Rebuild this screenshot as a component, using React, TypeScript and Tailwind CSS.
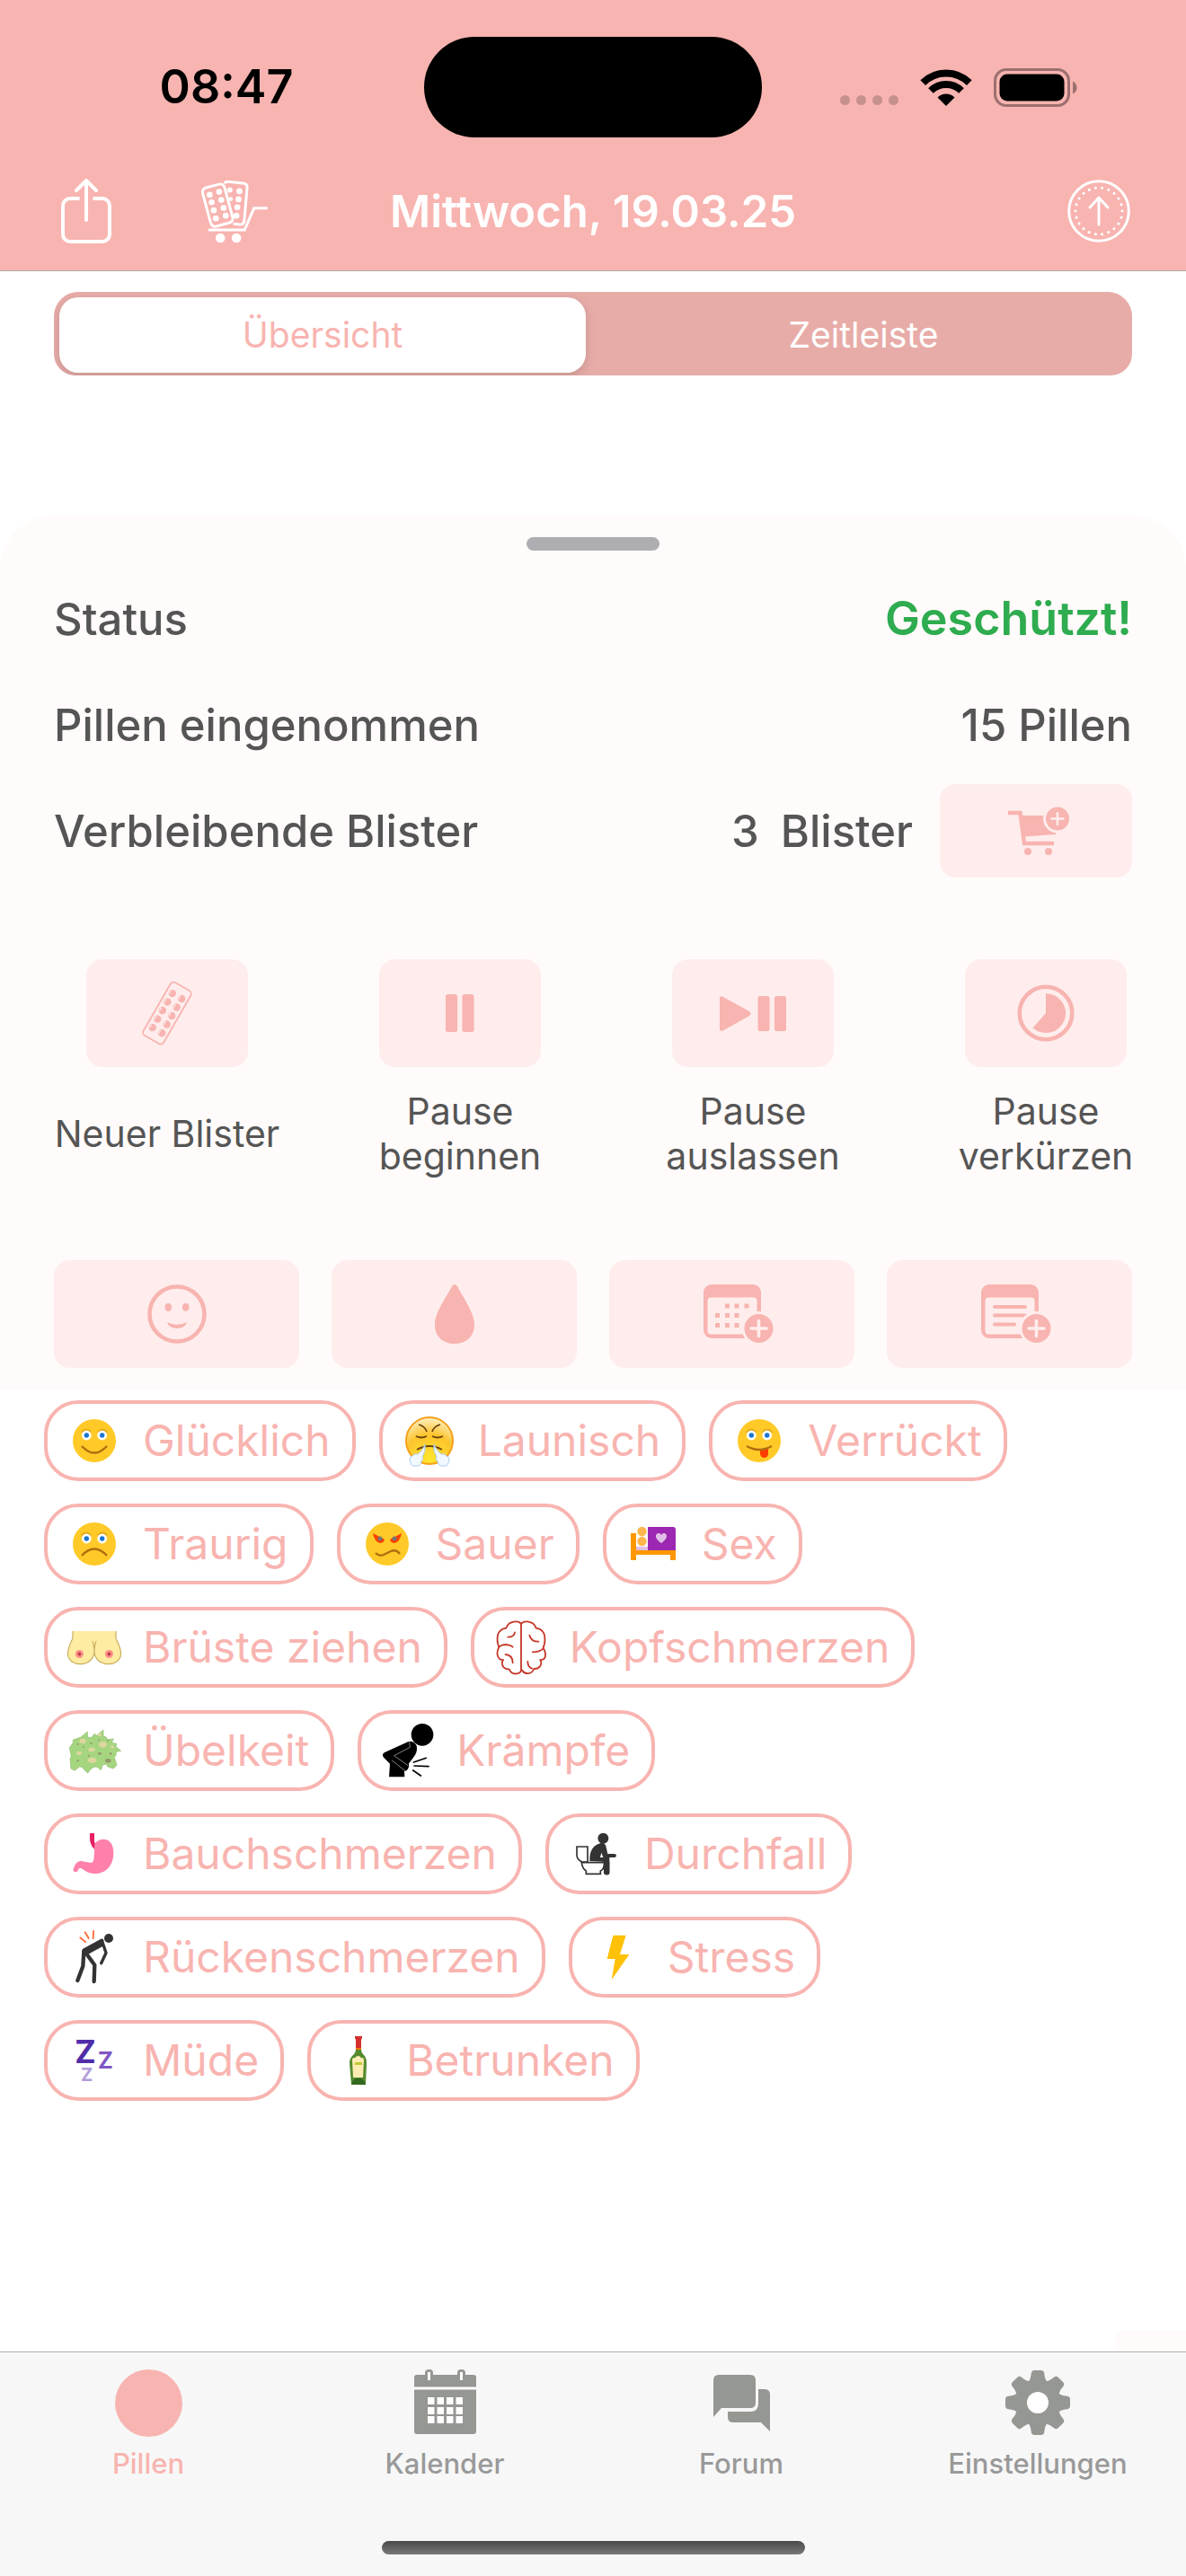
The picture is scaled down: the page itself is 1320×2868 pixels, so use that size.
import { useState } from "react";
import type { ReactNode } from "react";

/* START STATUS BAR ICONS */
function WifiIcon() {
  return (
    <svg className="w-[58px] h-[42px]" viewBox="0 0 58 42" fill="none" stroke="#000" strokeWidth="8">
      <path d="M3.2 16.2a36.5 36.5 0 0 1 51.6 0" />
      <path d="M12 25a24 24 0 0 1 34 0" />
      <path d="M29 42l-9.5-9.5a13.5 13.5 0 0 1 19 0z" fill="#000" stroke="none" />
    </svg>
  );
}

function BatteryIcon() {
  return (
    <svg className="w-[93px] h-[43px]" viewBox="0 0 93 43">
      <rect x="1.5" y="1.5" width="82" height="40" rx="12.5" fill="none" stroke="#9b706e" strokeWidth="3" />
      <rect x="6.5" y="6.5" width="72" height="30" rx="8.5" fill="#000" />
      <path d="M88 14.5c6 2.5 6 11.500 0 14z" fill="#9b706e" />
    </svg>
  );
}
/* END STATUS BAR ICONS */

/* START HEADER ICONS */
function ShareIcon() {
  return (
    <svg
      className="w-14 h-[72px]"
      viewBox="0 0 56 72"
      fill="none"
      stroke="#fff"
      strokeWidth="4"
      strokeLinecap="round"
      strokeLinejoin="round"
    >
      <path d="M19 22h-9a8 8 0 0 0-8 8v32a8 8 0 0 0 8 8h36a8 8 0 0 0 8-8V30a8 8 0 0 0-8-8h-9" />
      <path d="M28 46V3M17 13L28 2l11 11" />
    </svg>
  );
}

function BlisterCartIcon() {
  return (
    <svg className="w-[75px] h-[71px]" viewBox="69 88 226 212" fill="none" stroke="#fff" strokeWidth="9">
      <path d="M150 100q3-7 12-6l50 5q15 2 14 15l-10 112q-3 13-15 12l-22-3" />
      <rect x="89" y="106" width="76" height="134" rx="15" transform="rotate(-15 127 173)" />
      <path d="M96 256h121l32-73h45" />
      <g fill="#fff" stroke="none">
        <circle cx="100" cy="138" r="10" />
        <circle cx="132" cy="128" r="10" />
        <circle cx="107" cy="163" r="10" />
        <circle cx="139" cy="155" r="10" />
        <circle cx="114" cy="190" r="10" />
        <circle cx="147" cy="182" r="10" />
        <circle cx="121" cy="217" r="10" />
        <circle cx="154" cy="208" r="10" />
        <circle cx="168" cy="122" r="9" />
        <circle cx="200" cy="126" r="10" />
        <circle cx="171" cy="152" r="7" />
        <circle cx="197" cy="153" r="10" />
        <circle cx="193" cy="180" r="10" />
        <circle cx="190" cy="208" r="10" />
        <circle cx="136" cy="283" r="16" />
        <circle cx="190" cy="283" r="16" />
      </g>
    </svg>
  );
}

function TodayIcon() {
  return (
    <svg className="w-[70px] h-[70px]" viewBox="0 0 70 70" fill="none" stroke="#fff" strokeLinecap="round">
      <circle cx="35" cy="35" r="33.3" strokeWidth="3" />
      <circle cx="35" cy="35" r="26" strokeWidth="3" pathLength="220" strokeDasharray="0.1 9.9" />
      <path d="M35 50V21M25 31l10-11 10 11" strokeWidth="3" strokeLinejoin="round" />
    </svg>
  );
}
/* END HEADER ICONS */

/* START ACTION ICONS */
function CartPlusIcon() {
  return (
    <svg className="w-[78px] h-[54px]" viewBox="-8 0 78 54" fill="#f8b4b0">
      <path d="M0 7h13.5L18 41h33" fill="none" stroke="#f8b4b0" strokeWidth="4.5" />
      <path d="M14 10h41l-2 21-36 2.5z" />
      <circle cx="22" cy="50" r="4" />
      <circle cx="45" cy="50" r="4" />
      <circle cx="55" cy="13.5" r="16" fill="#feedec" />
      <circle cx="55" cy="13.5" r="13" />
      <path d="M55 6v15M47.5 13.5h15" stroke="#feedec" strokeWidth="2.5" />
    </svg>
  );
}

function BlisterIcon() {
  const rows = [14, 25, 36, 47, 58];
  return (
    <svg className="w-[72px] h-[76px]" viewBox="0 0 72 76" fill="#f8b4b0">
      <g transform="rotate(30 36 38) translate(0 2)">
        <rect x="23" y="2" width="26" height="68" rx="4" fill="none" stroke="#f8b4b0" strokeWidth="1.8" />
        {rows.map((y) => (
          <g key={y}>
            <circle cx="30" cy={y} r="4.2" />
            <circle cx="42" cy={y} r="4.2" />
            <path d={`M27.8 ${y + 2}a3 3 0 0 1 0-4M39.8 ${y + 2}a3 3 0 0 1 0-4`} fill="none" stroke="#feedec" />
          </g>
        ))}
      </g>
    </svg>
  );
}

function PauseIcon() {
  return (
    <svg className="w-8 h-[42px]" viewBox="0 0 32 42" fill="#f8b4b0">
      <rect x="0" y="0" width="13" height="42" rx="2.5" />
      <rect x="18.5" y="0" width="13" height="42" rx="2.5" />
    </svg>
  );
}

function PlayPauseIcon() {
  return (
    <svg className="w-[74px] h-[39px]" viewBox="0 0 74 39" fill="#f8b4b0">
      <path d="M0 2.5Q0-1 4 1l29 16q3 2.500 0 5L4 38.2Q0 40 0 36.500z" />
      <rect x="42.5" y="0" width="13" height="39" rx="2.5" />
      <rect x="61" y="0" width="13" height="39" rx="2.5" />
    </svg>
  );
}

function TimerIcon() {
  return (
    <svg className="w-16 h-16" viewBox="0 0 64 64" fill="#f8b4b0">
      <circle cx="32" cy="32" r="29.3" fill="none" stroke="#f8b4b0" strokeWidth="4.6" />
      <path d="M32 10a22 22 0 1 1-14.5 38.5L32 32z" />
    </svg>
  );
}

function SmileIcon() {
  return (
    <svg className="w-[66px] h-[66px]" viewBox="0 0 66 66" fill="#f8b4b0">
      <circle cx="33" cy="33" r="30.5" fill="none" stroke="#f8b4b0" strokeWidth="4.6" />
      <ellipse cx="23.3" cy="25.5" rx="3.8" ry="4.4" />
      <ellipse cx="42.7" cy="25.5" rx="3.8" ry="4.4" />
      <path d="M22 42q11 5.5 22 0-2 7-11 7t-11-7z" />
    </svg>
  );
}

function DropIcon() {
  return (
    <svg className="w-11 h-[66px]" viewBox="0 0 44 66" fill="#f8b4b0">
      <path d="M22 0q2 0 3.5 3C31 14 44 31 44 45c0 13-9 21-22 21S0 58 0 45C0 31 13 14 18.5 3Q20 0 22 0z" />
    </svg>
  );
}

function CardPlus({ children }: { children: ReactNode }) {
  return (
    <svg className="w-[92px] h-[66px]" viewBox="-14 0 92 66" fill="#f8b4b0">
      <rect x="0" y="0" width="64" height="60" rx="9" />
      <rect x="4.5" y="14.5" width="55" height="41" rx="4" fill="#feedec" />
      {children}
      <circle cx="61.5" cy="49" r="19" fill="#feedec" />
      <circle cx="61.5" cy="49" r="16" />
      <path d="M61.5 40.5v17M53 49h17" stroke="#feedec" strokeWidth="3.6" strokeLinecap="round" />
    </svg>
  );
}

function CalendarPlusIcon() {
  return (
    <CardPlus>
      <path
        d="M24 24h5M34.5 24h5M45.5 24h5M13 34.5h5M24 34.5h5M34.5 34.5h5M13 45.5h5M24 45.5h5M34.5 45.5h5"
        stroke="#f8b4b0"
        strokeWidth="5"
      />
    </CardPlus>
  );
}

function NotePlusIcon() {
  return (
    <CardPlus>
      <path d="M15 25h34M15 34.5h34M15 44.5h22" stroke="#f8b4b0" strokeWidth="4" strokeLinecap="round" />
    </CardPlus>
  );
}
/* END ACTION ICONS */

/* START MOOD ICONS */
function Face({ children, eyes = true }: { children: ReactNode; eyes?: boolean }) {
  return (
    <svg className="w-18 h-18" viewBox="0 0 72 72" fill="none">
      <circle cx="36" cy="36" r="24" fill="#ffca28" />
      {eyes && (
        <>
          <path d="M22 27q5-6 10 0M40 27q5-6 10 0" stroke="#e2a610" strokeWidth="2.5" />
          <circle cx="27.3" cy="30" r="5.4" fill="#fff" />
          <circle cx="44.7" cy="30" r="5.4" fill="#fff" />
          <circle cx="27.3" cy="30" r="2.7" fill="#1976d2" />
          <circle cx="44.7" cy="30" r="2.7" fill="#1976d2" />
        </>
      )}
      {children}
    </svg>
  );
}

function HappyFace() {
  return (
    <Face>
      <path d="M22 42q14 15 28 0" stroke="#b26c0f" strokeWidth="2.4" />
    </Face>
  );
}

function SadFace() {
  return (
    <Face>
      <path d="M22 49q14-15 28 0" stroke="#b26c0f" strokeWidth="2.4" />
    </Face>
  );
}

function CrazyFace() {
  return (
    <Face>
      <path d="M37 46l9-1v6q-1 4-4.5 4T37 51z" fill="#ff3d00" />
      <path d="M22 42q14 8 28 0" stroke="#b26c0f" strokeWidth="2.4" />
    </Face>
  );
}

function AngryFace() {
  return (
    <Face eyes={false}>
      <path d="M20 24l13 7q-1 4-5 4-6-1-8-11zM52 24l-13 7q1 4 5 4 6-1 8-11z" fill="#ff3d00" />
      <circle cx="28" cy="30" r="2.5" fill="#757575" />
      <circle cx="44" cy="30" r="2.5" fill="#757575" />
      <path d="M23 46q4 4 9 2l8-4q6-2.5 10 3" stroke="#b26c0f" strokeWidth="2.4" />
    </Face>
  );
}

function MoodyFace() {
  return (
    <svg className="w-18 h-18" viewBox="0 0 72 72" fill="none">
      <defs>
        <radialGradient id="moody" cx="0.5" cy="0.9" r="0.9">
          <stop offset="0" stopColor="#ffe62e" />
          <stop offset="0.6" stopColor="#fdc42e" />
          <stop offset="1" stopColor="#fdf0c4" />
        </radialGradient>
      </defs>
      <circle cx="36" cy="36" r="26" fill="url(#moody)" stroke="#f5a01c" strokeWidth="2" />
      <path d="M24 18q7 2 9 8M48 18q-7 2-9 8" stroke="#6b430b" strokeWidth="1.8" />
      <path d="M21 31q6 3 12 0M39 31q6 3 12 0M22 46q14-8 28 0" stroke="#6b430b" strokeWidth="1.8" />
      <path
        d="M31 40q1 8-3 14 2 3-1 5-1 6-6 5-6 1-6-4-3-5 2-7 2-3 6-2 5-3 8-11zM41 40q-1 8 3 14-2 3 1 5 1 6 6 5 6 1 6-4 3-5-2-7-2-3-6-2-5-3-8-11z"
        fill="#f2f8ff"
        stroke="#a9cdf5"
      />
    </svg>
  );
}

function BedIcon() {
  return (
    <svg className="w-18 h-18" viewBox="0 0 72 72">
      <path d="M17 39h13v5H17z" fill="#e1bee7" />
      <path d="M30 17h28q3 0 3 3v23H30z" fill="#9c27b0" />
      <path d="M11 24h6v19h44v11h-6v-6H17v6h-6z" fill="#ff9800" />
      <circle cx="23.5" cy="22" r="5.2" fill="#ffb74d" />
      <circle cx="23.5" cy="33" r="5.2" fill="#ffb74d" />
      <path d="M45 35c-9-6-6-11-3-11 2 0 3 2 3 2s1-2 3-2c3 0 6 5-3 11z" fill="#e1bee7" />
    </svg>
  );
}

function BreastIcon() {
  return (
    <svg className="w-18 h-18" viewBox="0 0 72 72">
      <path d="M12 18h48v8q6 11 6 17c0 16-29 16-30-1-1 17-29.500 17-29.500 1q0-6 5.500-17z" fill="#ffeca3" />
      <path
        d="M12 18v8q-5.500 11-5.500 17c0 16 29.500 16 29.500-3q0-6-2-11M60 18v8q5.500 11 5.500 17c0 16-29.500 16-29.500-3q0-6 2-11"
        fill="none"
        stroke="#c9b060"
        strokeWidth="1.2"
      />
      <circle cx="19.4" cy="43.5" r="4.5" fill="#ff8f88" />
      <circle cx="52.4" cy="43.5" r="4.5" fill="#ff8f88" />
      <circle cx="19.4" cy="43.5" r="1.9" fill="#b84548" />
      <circle cx="52.4" cy="43.5" r="1.9" fill="#b84548" />
    </svg>
  );
}

function BrainIcon() {
  return (
    <svg
      className="w-18 h-18"
      viewBox="492 -6 216 216"
      fill="none"
      stroke="#c6392b"
      strokeWidth="5.5"
      strokeLinecap="round"
      strokeLinejoin="round"
    >
      <path d="M600 24v156" />
      <path d="M600 24q-5-9-20-8-24 2-30 22-20 3-27 20-6 22 3 43-12 25 1 39 5 5 13 4-8 14 2 25 7 7 18 6 8 18 24 15 12 0 16-10" />
      <path d="M600 24q5-9 20-8 24 2 30 22 20 3 27 20 6 22-3 46 13 22 3 36-5 5-13 4 7 14-3 24-7 7-18 6-8 18-24 15-11 0-15-10" />
      <path d="M526 101q14-12 34-6 8 2 12 6M556 68q21 0 23-16M548 126q24 2 24 28M628 62q5 21 30 21M674 106q-12 12-36 12M622 150q0 18 14 23" />
    </svg>
  );
}

function NauseaIcon() {
  return (
    <svg className="w-18 h-18" viewBox="27 9 216 216">
      <path
        d="M52 108l12-17v-10l25-8 23-19v18l12 2 13-14 4 8 24-20v22l10 2 3 8 21-2-6 13 16 3-2 10 17 14-16 3-1 13-6 3 9 29-12 11-18-6-6-9-11 3-6 17-12-10-8-1-12 6-12 15-11-10-8-10-9-1-16 13-12-7-3-32 4-10z"
        fill="#a5d67f"
        stroke="#8cb96c"
        strokeWidth="2"
      />
      <g fill="#dfd6a0">
        <ellipse cx="96" cy="85" rx="11" ry="8" />
        <ellipse cx="163" cy="97" rx="13" ry="10" />
        <ellipse cx="126" cy="114" rx="11" ry="7" />
        <ellipse cx="84" cy="125" rx="9" ry="6" />
        <ellipse cx="128" cy="149" rx="15" ry="9" />
        <ellipse cx="153" cy="64" rx="7" ry="5" />
        <ellipse cx="195" cy="105" rx="6" ry="5" />
      </g>
      <g fill="#96996a">
        <ellipse cx="181" cy="151" rx="10" ry="7" />
        <ellipse cx="153" cy="127" rx="7" ry="4" />
        <ellipse cx="124" cy="93" rx="4" ry="3" />
        <ellipse cx="80" cy="151" rx="4" ry="3" />
        <circle cx="99" cy="105" r="3" />
        <circle cx="117" cy="134" r="3" />
        <circle cx="189" cy="127" r="4" />
        <circle cx="150" cy="82" r="3" />
        <circle cx="80" cy="96" r="3" />
        <circle cx="180" cy="84" r="3" />
      </g>
    </svg>
  );
}

function CrampsIcon() {
  return (
    <svg className="w-18 h-18" viewBox="117 339 216 216" strokeLinecap="round" strokeLinejoin="round">
      <circle cx="273" cy="394" r="37" />
      <path d="M225 418q16-6 28 10 6 16-4 34-14 20-21 28 2 14-7 24l-8 2 1 19h-52l3-44-20-20q-9-9 1-17z" />
      <path d="M230 420l2 16-53 28 45 32M172 480l43 34" fill="none" stroke="#c4c4c4" strokeWidth="2" />
      <path d="M244 486l42-14M246 498l48 2M242 513l26 18" stroke="#000" strokeWidth="5" />
    </svg>
  );
}

function StomachIcon() {
  return (
    <svg className="w-18 h-18" viewBox="27 354 216 216">
      <path d="M120 393h15v29l8 16-8 8q-15-14-15-35z" fill="#e91e63" />
      <path
        d="M136 428c14-22 63-26 63 30 0 46-28 70-63 70-30 0-38-20-50-18-7 2-4 12-11 12-9 1-12-3-10-9 5-17 14-28 25-27 15 2 26 7 37 5 11-3 6-42 9-63z"
        fill="#ff80ab"
      />
    </svg>
  );
}

function ToiletIcon() {
  return (
    <svg className="w-18 h-18" viewBox="741 684 216 216" fill="#333">
      <circle cx="874" cy="740" r="18" />
      <path d="M860 758q17-8 23 8l6 26h22q7 0 7 6t-7 6h-16v50q0 8-9 8t-10-8l-1-36-46-2q-2-47 31-58z" />
      <path d="M868 788l-4 16h10z" fill="#fff" />
      <path d="M786 768h36v51h-19q-17-10-17-22z" fill="#fff" stroke="#333" strokeWidth="5" />
      <path d="M802 821h76l-2 14q-2 10-11 14v10h-48v-10q-13-8-15-28z" fill="#fff" stroke="#333" strokeWidth="5" />
      <path d="M877 818h18v36q0 8-9 8t-10-8z" />
    </svg>
  );
}

function BackPainIcon() {
  return (
    <svg
      className="w-18 h-18"
      viewBox="27 699 216 216"
      fill="none"
      stroke="#333"
      strokeWidth="13"
      strokeLinecap="round"
      strokeLinejoin="round"
    >
      <circle cx="183" cy="744" r="15" fill="#333" stroke="none" />
      <path d="M160 752l-60 33-3 52-18 48M108 795l28 38-2 55" />
      <path d="M102 784l54-29 3 12-44 24z" strokeWidth="10" fill="#333" />
      <path d="M162 757l12 36-16 34" strokeWidth="10" />
      <path d="M88 742l17 14M104 724l12 20M132 720l-1 24" stroke="#ff7043" strokeWidth="6" />
    </svg>
  );
}

function StressIcon() {
  return (
    <svg className="w-18 h-18" viewBox="819 1029 216 216">
      <path d="M907 1064h43l-20 64h31l-59 85 12-70h-27z" fill="#ffc107" />
    </svg>
  );
}

function SleepIcon() {
  return (
    <svg className="w-18 h-18 font-bold" viewBox="27 1044 216 216">
      <text x="70" y="1160" fontSize="106" fill="#512da8">
        Z
      </text>
      <text x="147" y="1179" fontSize="76" fill="#7e57c2">
        Z
      </text>
      <text x="90" y="1220" fontSize="60" fill="#b39ddb">
        Z
      </text>
    </svg>
  );
}

function BottleIcon() {
  return (
    <svg className="w-18 h-18" viewBox="0 0 72 72">
      <path d="M33 9h8v2l-1 2v10h-6V13l-1-2z" fill="#d32f2f" />
      <path d="M34 22h6v3h-6z" fill="#ff6f00" />
      <path d="M34 24h6q0 4 4 7 2 3 2 8l-1 24H29l-2-24q0-5 3-8 4-3 4-7z" fill="#558b2f" />
      <path d="M31 33q2 1 3-1 3-2 5 0 1 2 3 1l1 2-1 20H31l-1-20z" fill="#ffecb3" />
      <path d="M33 38h8v3h-8z" fill="#c0ca33" />
      <path d="M29 63q1-5 5-7h6q4 2 5 7z" fill="#33691e" />
    </svg>
  );
}
/* END MOOD ICONS */

/* START TAB ICONS */
function PillIcon() {
  return (
    <svg className="w-[75px] h-[75px]" viewBox="0 0 75 75">
      <circle cx="37.5" cy="37.5" r="37.5" fill="#f8b4b0" />
    </svg>
  );
}

function CalendarIcon() {
  const cols = [15, 25.5, 36, 46.5];
  const rows = [31, 42, 52];
  return (
    <svg className="w-[69px] h-[75px]" viewBox="0 0 69 75" fill="#959793">
      <rect x="0" y="6" width="69" height="66" rx="3" />
      <rect x="12" y="0" width="9" height="14" rx="4" />
      <rect x="48" y="0" width="9" height="14" rx="4" />
      <g fill="#fff">
        <rect x="0" y="19.5" width="69" height="3" />
        <rect x="15" y="3" width="3" height="9" />
        <rect x="51" y="3" width="3" height="9" />
        {rows.map((y) => cols.map((x) => <rect key={`${x}-${y}`} x={x} y={y} width="7.5" height="8" />))}
      </g>
    </svg>
  );
}

function ForumIcon() {
  return (
    <svg className="w-[63px] h-[75px]" viewBox="0 0 63 75" fill="#959793">
      <path d="M6 6h35q6 0 6 6v25q0 6-6 6H9l-9 10V12q0-6 6-6z" />
      <path d="M50 22h7q6 0 6 6v41l-10-10H22q-6 0-6-6v-6h25q9 0 9-9z" />
    </svg>
  );
}

function GearIcon() {
  const teeth = [0, 45, 90, 135, 180, 225, 270, 315];
  return (
    <svg className="w-18 h-[75px]" viewBox="0 0 72 75" fill="#959793">
      {teeth.map((angle) => (
        <path
          key={angle}
          d="M25 14q2-1 3-5l1-6q1-2 3-2h8q2 0 3 2l1 6q1 4 3 5v10H25z"
          transform={`rotate(${angle} 36 37)`}
        />
      ))}
      <circle cx="36" cy="37" r="25" />
      <circle cx="36" cy="37" r="12" fill="#fff" />
    </svg>
  );
}
/* END TAB ICONS */

const actions = [
  { label: "Neuer Blister", lines: ["Neuer Blister"], icon: <BlisterIcon /> },
  { label: "Pause beginnen", lines: ["Pause", "beginnen"], icon: <PauseIcon /> },
  { label: "Pause auslassen", lines: ["Pause", "auslassen"], icon: <PlayPauseIcon /> },
  { label: "Pause verkürzen", lines: ["Pause", "verkürzen"], icon: <TimerIcon /> },
];

const trackers = [
  { label: "Stimmung", icon: <SmileIcon /> },
  { label: "Blutung", icon: <DropIcon /> },
  { label: "Termin hinzufügen", icon: <CalendarPlusIcon /> },
  { label: "Notiz hinzufügen", icon: <NotePlusIcon /> },
];

const moods = [
  [
    { label: "Glücklich", icon: <HappyFace /> },
    { label: "Launisch", icon: <MoodyFace /> },
    { label: "Verrückt", icon: <CrazyFace /> },
  ],
  [
    { label: "Traurig", icon: <SadFace /> },
    { label: "Sauer", icon: <AngryFace /> },
    { label: "Sex", icon: <BedIcon /> },
  ],
  [
    { label: "Brüste ziehen", icon: <BreastIcon /> },
    { label: "Kopfschmerzen", icon: <BrainIcon /> },
  ],
  [
    { label: "Übelkeit", icon: <NauseaIcon /> },
    { label: "Krämpfe", icon: <CrampsIcon /> },
  ],
  [
    { label: "Bauchschmerzen", icon: <StomachIcon /> },
    { label: "Durchfall", icon: <ToiletIcon /> },
  ],
  [
    { label: "Rückenschmerzen", icon: <BackPainIcon /> },
    { label: "Stress", icon: <StressIcon /> },
  ],
  [
    { label: "Müde", icon: <SleepIcon /> },
    { label: "Betrunken", icon: <BottleIcon /> },
  ],
];

const tabs = [
  { label: "Pillen", icon: <PillIcon />, color: "text-[#f8b4b0]" },
  { label: "Kalender", icon: <CalendarIcon />, color: "text-[#999999]" },
  { label: "Forum", icon: <ForumIcon />, color: "text-[#999999]" },
  { label: "Einstellungen", icon: <GearIcon />, color: "text-[#999999]" },
];

export default function App() {
  const [view, setView] = useState("overview");
  const selected = "bg-white text-[#f8b4b0] shadow-[0_4px_12px_rgba(0,0,0,0.15)]";

  return (
    <div className="min-h-screen flex flex-col bg-white font-['Inter',sans-serif] text-[#555555]">
      {/* START HEADER */}
      <header className="bg-[#f8b4b0] border-b border-[#b3aeae]">
        <div className="grid grid-cols-[1fr_376px_1fr] items-center pt-[41px]">
          <p className="text-[52px] leading-none font-semibold text-black text-center pl-8">08:47</p>
          <div className="h-28 rounded-full bg-black" />
          <div className="flex items-center justify-end gap-6 pr-[121px]">
            <div className="flex gap-[7px] mt-7">
              <span className="w-[11px] h-[11px] rounded-full bg-[#c6908d]" />
              <span className="w-[11px] h-[11px] rounded-full bg-[#c6908d]" />
              <span className="w-[11px] h-[11px] rounded-full bg-[#c6908d]" />
              <span className="w-[11px] h-[11px] rounded-full bg-[#c6908d]" />
            </div>
            <WifiIcon />
            <BatteryIcon />
          </div>
        </div>
        <div className="grid grid-cols-[1fr_auto_1fr] items-center h-[148px] px-[62px] pt-4">
          <div className="flex items-center gap-[99px] pl-[6px]">
            <button type="button" aria-label="Teilen">
              <ShareIcon />
            </button>
            <button type="button" aria-label="Blister kaufen">
              <BlisterCartIcon />
            </button>
          </div>
          <h1 className="text-[49px] leading-none font-semibold text-white">Mittwoch, 19.03.25</h1>
          <button type="button" aria-label="Heute" className="justify-self-end">
            <TodayIcon />
          </button>
        </div>
      </header>
      {/* END HEADER */}

      <main className="flex-1 flex flex-col">
        {/* START SEGMENTED CONTROL */}
        <div className="mx-[60px] mt-[23px] h-[93px] overflow-hidden rounded-t-[27px] rounded-b-3xl">
          <div className="grid grid-cols-2 gap-4 bg-[#e8aca8] p-[6px] pb-3 text-[39px]">
            <button
              type="button"
              onClick={() => setView("overview")}
              className={`h-[84px] rounded-[21px] ${view === "overview" ? selected : "text-white"}`}
            >
              Übersicht
            </button>
            <button
              type="button"
              onClick={() => setView("timeline")}
              className={`h-[84px] rounded-[21px] ${view === "timeline" ? selected : "text-white"}`}
            >
              Zeitleiste
            </button>
          </div>
        </div>
        {/* END SEGMENTED CONTROL */}

        {/* START SHEET */}
        <section className="mt-[156px] rounded-t-[60px] bg-[#fffbfa] pt-6 pb-6">
          <div className="mx-auto w-[148px] h-[15px] rounded-full bg-[#aeaeb2]" />
          <dl className="mt-[17px] px-[60px] text-[49px] leading-none font-medium">
            <div className="flex items-center justify-between h-[118px]">
              <dt>Status</dt>
              <dd className="font-semibold text-[#2eac4f] text-[52px]">Geschützt!</dd>
            </div>
            <div className="flex items-center justify-between h-[118px]">
              <dt>Pillen eingenommen</dt>
              <dd>15 Pillen</dd>
            </div>
            <div className="flex items-center justify-between h-[118px]">
              <dt>Verbleibende Blister</dt>
              <dd className="flex items-center">
                <span>3</span>
                <span className="ml-6">Blister</span>
                <button
                  type="button"
                  aria-label="Blister hinzufügen"
                  className="ml-[30px] w-[214px] h-[104px] rounded-[18px] bg-[#feedec] flex items-center justify-center"
                >
                  <CartPlusIcon />
                </button>
              </dd>
            </div>
          </dl>

          {/* START ACTIONS */}
          <div className="mt-[84px] pl-[90px] pr-[60px] flex justify-between">
            {actions.map((action) => (
              <div key={action.label} className="w-48 flex flex-col items-center">
                <button
                  type="button"
                  aria-label={action.label}
                  className="w-[180px] h-30 rounded-[18px] bg-[#feedec] flex items-center justify-center"
                >
                  {action.icon}
                </button>
                <div className="mt-6 h-[100px] flex flex-col justify-center text-center text-[41px] leading-[50px] whitespace-nowrap">
                  {action.lines.map((line) => (
                    <p key={line}>{line}</p>
                  ))}
                </div>
              </div>
            ))}
          </div>
          {/* END ACTIONS */}

          {/* START TRACKERS */}
          <div className="mt-[91px] px-[60px] grid grid-cols-4 gap-9">
            {trackers.map((tracker) => (
              <button
                key={tracker.label}
                type="button"
                aria-label={tracker.label}
                className="h-30 rounded-[18px] bg-[#feedec] flex items-center justify-center"
              >
                {tracker.icon}
              </button>
            ))}
          </div>
          {/* END TRACKERS */}
        </section>
        {/* END SHEET */}

        {/* START MOODS */}
        <section className="mt-3 px-[49px] flex flex-col gap-[25px]">
          {moods.map((row) => (
            <div key={row[0].label} className="flex gap-[26px]">
              {row.map((mood) => (
                <button
                  key={mood.label}
                  type="button"
                  className="h-[90px] flex items-center gap-[18px] pl-4 pr-6 rounded-[38px] border-4 border-[#f8b4b0] text-5xl text-[#f8b4b0]"
                >
                  {mood.icon}
                  {mood.label}
                </button>
              ))}
            </div>
          ))}
        </section>
        {/* END MOODS */}

        <div className="mt-auto self-end w-[78px] h-[23px] bg-[#fffbfa]" />
      </main>

      {/* START TAB BAR */}
      <footer className="border-t border-[#b0b0b0] bg-[#f7f7f7] pt-[19px] pb-6">
        <nav className="grid grid-cols-4">
          {tabs.map((tab) => (
            <a key={tab.label} href="#" className={`flex flex-col items-center ${tab.color}`}>
              {tab.icon}
              <span className="mt-3 text-[31px] leading-9 font-medium">{tab.label}</span>
            </a>
          ))}
        </nav>
        <div className="mx-auto mt-[68px] w-[471px] h-[15px] rounded-full bg-linear-to-b from-[#4a4a4a] to-[#787878]" />
      </footer>
      {/* END TAB BAR */}
    </div>
  );
}
